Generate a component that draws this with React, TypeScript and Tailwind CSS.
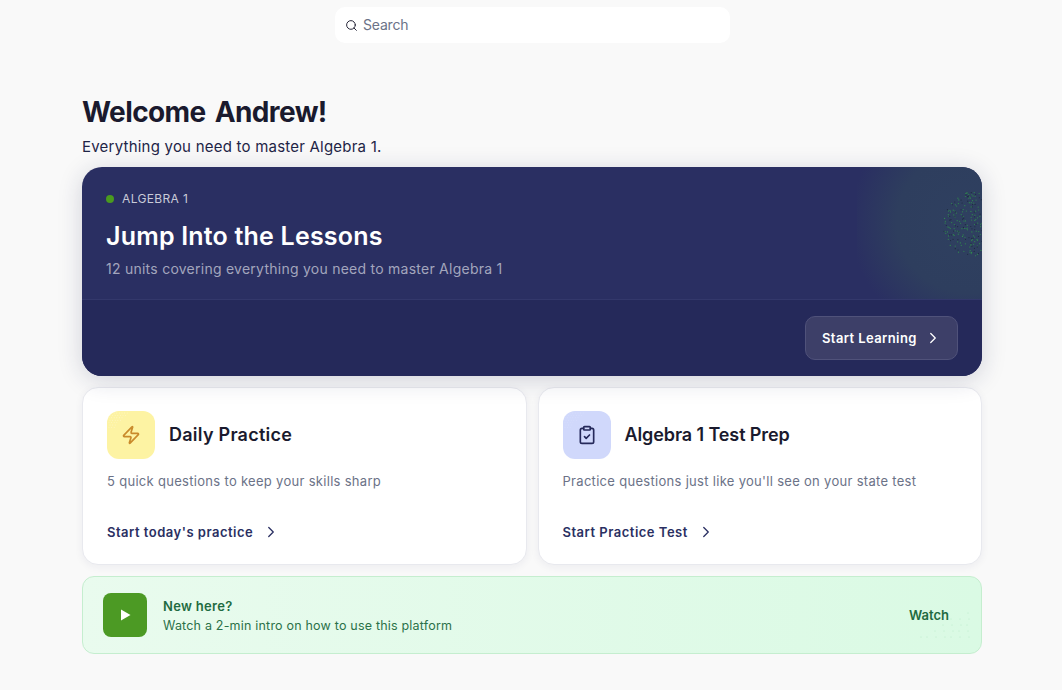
import { ChevronRight, ClipboardCheck, Search, Zap } from 'lucide-react';

// dots for the hero glow: sunflower spiral with some jitter so no arms show
const heroDots = Array.from({ length: 300 }, (_, i) => {
  const r = 1.9 * Math.sqrt(i);
  const a = i * 2.399963 + Math.sin(i * 12.9898) * 1.4;
  return {
    x: 106 + r * Math.cos(a) + Math.sin(i * 78.233) * 1.2,
    y: 36 + r * Math.sin(a) + Math.cos(i * 37.719) * 1.2,
    dark: i % 3 === 0,
  };
}).filter((d) => d.x < 112);

const cornerDots = Array.from({ length: 60 }, (_, i) => ({
  x: 4 + (i % 10) * 8 + (i % 3),
  y: 4 + Math.floor(i / 10) * 6,
})).filter((d) => d.x + d.y * 1.6 > 84);

const tileDots = Array.from({ length: 70 }, (_, i) => ({
  x: 2 + (i % 10) * 2.6 + (Math.floor(i / 10) % 2),
  y: 2 + Math.floor(i / 10) * 2.4,
})).filter((d) => d.x + d.y < 24);

const PracticeCard = ({
  icon,
  iconBg,
  dotColor,
  title,
  titleTracking,
  text,
  link,
}: {
  icon: React.ReactNode;
  iconBg: string;
  dotColor: string;
  title: string;
  titleTracking: string;
  text: string;
  link: string;
}) => (
  <div className="flex-1 h-[178px] rounded-[16px] bg-white border border-[#e8e9ee] shadow-[0_2px_8px_rgba(30,35,80,0.06)] pt-[23px] pl-[24px] pr-4">
    <div className="flex items-center gap-[14px]">
      <div className={`relative w-12 h-12 rounded-[12px] overflow-hidden flex items-center justify-center ${iconBg}`}>
        <svg className="absolute left-0 top-0" width="28" height="28" viewBox="0 0 28 28">
          {tileDots.map((d, i) => (
            <circle key={i} cx={d.x} cy={d.y} r="0.45" fill={dotColor} />
          ))}
        </svg>
        <div className="relative">{icon}</div>
      </div>
      <h2 className={`text-[18px] leading-6 font-semibold text-[#1a1a2e] ${titleTracking}`}>{title}</h2>
    </div>
    <p className="mt-[13px] text-[13px] leading-[18px] text-[#6b7287] tracking-[0.3px]">{text}</p>
    <div className="mt-[33px] flex items-center gap-[9px] text-[#2a2f62]">
      <span className="text-[13px] leading-[18px] font-semibold tracking-[0.5px]">{link}</span>
      <ChevronRight size={18} strokeWidth={1.75} />
    </div>
  </div>
);

export default function App() {
  return (
    <div className="min-h-[690px] bg-[#f9f9f9] font-['Inter','Liberation_Sans',sans-serif]">
      <div className="w-[900px] ml-[82px] pt-[7px]">
        <div className="w-[395px] h-9 ml-[253px] rounded-[10px] bg-white flex items-center pl-[10px] gap-[5px]">
          <Search size={13} strokeWidth={1.75} className="text-[#1a1a2e]" />
          <span className="text-[14px] text-[#6b7287] leading-5 tracking-[-0.2px]">Search</span>
        </div>

        <h1 className="mt-[51px] text-[28px] leading-9 font-bold text-[#1a1a2e] tracking-[-0.6px] [word-spacing:3px]">
          Welcome Andrew!
        </h1>
        <p className="mt-[6px] text-[15px] leading-[22px] text-[#1f2547] tracking-[0.22px]">
          Everything you need to master Algebra 1.
        </p>

        <div className="relative mt-[9px] h-[209px] rounded-[20px] overflow-hidden bg-[#2a2f62] shadow-[0_4px_24px_rgba(30,35,80,0.18)]">
          <div className="relative h-[133px] pt-[24px] pl-6 border-b border-[#33386b]">
            <div className="absolute right-0 top-0 bottom-0 w-[125px] bg-[radial-gradient(circle_118px_at_111px_55px,#2f4060_0%,#2e3e5e_60%,transparent_100%)]" />
            <svg className="absolute right-0 top-[20px]" width="112" height="80" viewBox="0 0 112 80">
              {heroDots.map((d, i) => (
                <circle key={i} cx={d.x} cy={d.y} r="0.6" fill={d.dark ? '#1e2a3e' : '#2f8a4c'} />
              ))}
            </svg>
            <div className="relative flex items-center gap-2">
              <span className="w-2 h-2 rounded-full bg-[#4a9a1f]" />
              <span className="text-[12px] leading-4 font-normal tracking-[0.35px] text-[#c9cbd8]">ALGEBRA 1</span>
            </div>
            <h2 className="relative mt-[13px] text-[25px] leading-8 font-semibold text-white tracking-[0.2px]">
              Jump Into the Lessons
            </h2>
            <p className="relative mt-[7px] text-[14px] leading-5 text-[#a3a6bd] tracking-[0.25px]">
              12 units covering everything you need to master Algebra 1
            </p>
          </div>
          <div className="relative h-[76px] bg-[#25295a] flex justify-end items-start pt-[16px] pr-6">
            <div className="w-[153px] h-[44px] rounded-[10px] bg-[#3d3f68] border border-[#50527a] flex items-center pl-4 gap-[7px] text-white">
              <span className="text-[13px] leading-5 font-semibold tracking-[0.4px]">Start Learning</span>
              <ChevronRight size={18} strokeWidth={1.75} />
            </div>
          </div>
        </div>

        <div className="mt-[11px] flex gap-[11px]">
          <PracticeCard
            icon={<Zap size={20} strokeWidth={2} className="text-[#c98a2b]" />}
            iconBg="bg-[#fdf3a3]"
            dotColor="#fff9d6"
            title="Daily Practice"
            titleTracking="tracking-[0.25px]"
            text="5 quick questions to keep your skills sharp"
            link="Start today's practice"
          />
          <PracticeCard
            icon={<ClipboardCheck size={20} strokeWidth={2} className="text-[#25295a]" />}
            iconBg="bg-[#d0d8fb]"
            dotColor="#dbe1fc"
            title="Algebra 1 Test Prep"
            titleTracking="tracking-[-0.1px]"
            text="Practice questions just like you'll see on your state test"
            link="Start Practice Test"
          />
        </div>

        <div className="relative mt-[11px] h-[78px] rounded-[12px] overflow-hidden border border-[#c5eecf] bg-gradient-to-r from-[#e9fbee] to-[#dafae4] flex items-center pl-5 pr-8">
          <div className="w-11 h-11 rounded-[8px] bg-[#4c9a24] flex items-center justify-center">
            <svg width="14" height="14" viewBox="0 0 14 14">
              <path d="M3 1.5 L12.5 7 L3 12.5 Z" fill="#ffffff" />
            </svg>
          </div>
          <div className="ml-4 flex-1 pt-[2px]">
            <div className="text-[13px] leading-[18px] font-semibold text-[#1f6b41] tracking-[0.3px]">New here?</div>
            <div className="mt-[2px] text-[12.5px] leading-[18px] text-[#2b7149] tracking-[0.2px]">
              Watch a 2-min intro on how to use this platform
            </div>
          </div>
          <span className="mt-[2px] text-[13px] font-semibold text-[#1f6b41]">Watch</span>
          <svg className="absolute right-0 bottom-0" width="90" height="50" viewBox="0 0 90 50">
            {cornerDots.map((d, i) => (
              <circle key={i} cx={d.x} cy={d.y} r="0.5" fill="#b5e8c5" />
            ))}
          </svg>
        </div>
      </div>
    </div>
  );
}
